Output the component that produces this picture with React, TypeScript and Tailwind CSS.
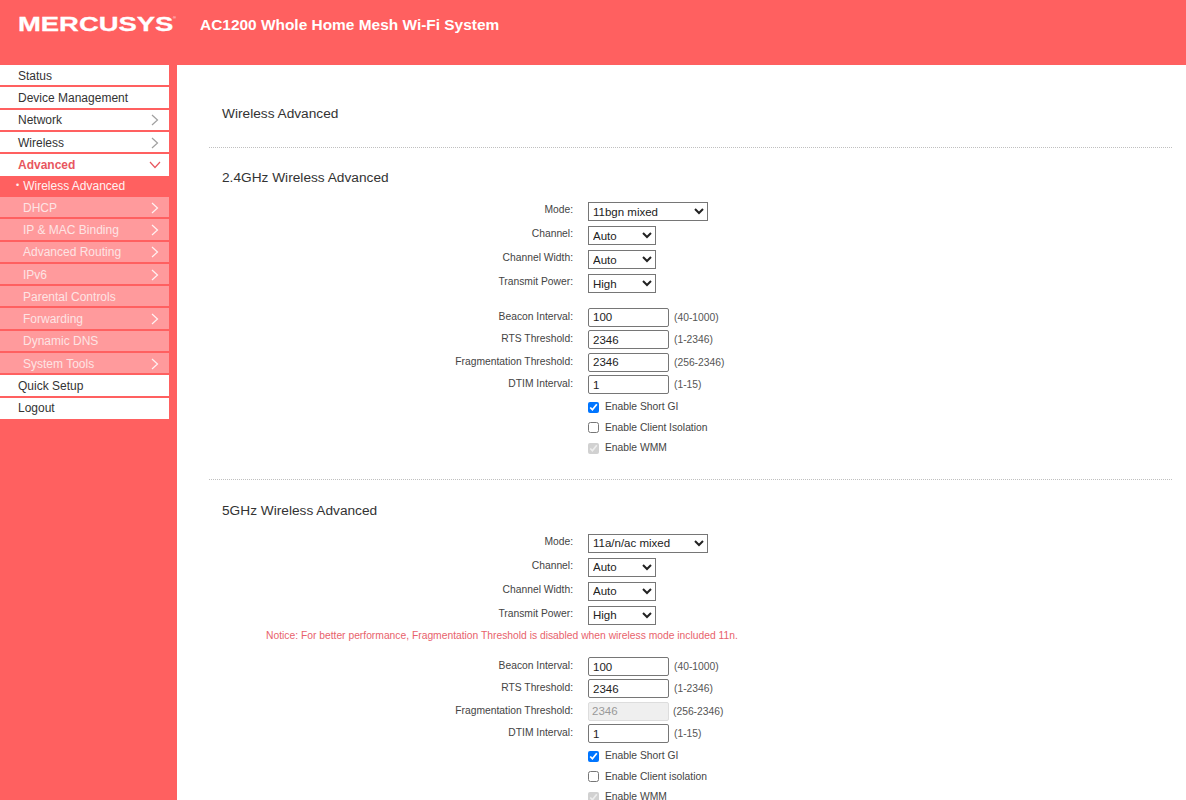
const menuTop = [
  { label: 'Status' },
  { label: 'Device Management' },
  { label: 'Network', arrow: true },
  { label: 'Wireless', arrow: true },
];

const subMenu = [
  { label: 'DHCP', arrow: true },
  { label: 'IP & MAC Binding', arrow: true },
  { label: 'Advanced Routing', arrow: true },
  { label: 'IPv6', arrow: true },
  { label: 'Parental Controls' },
  { label: 'Forwarding', arrow: true },
  { label: 'Dynamic DNS' },
  { label: 'System Tools', arrow: true },
];

function Chevron({ className }: { className: string }) {
  return (
    <svg width="8" height="12" viewBox="0 0 8 12" fill="none" className={className}>
      <path d="M1 1l5.5 5L1 11" stroke="currentColor" strokeWidth="1.2" />
    </svg>
  );
}

function MenuRow({ label, arrow }: { label: string; arrow?: boolean }) {
  return (
    <div className="flex h-[22.3px] items-center justify-between border-b-2 border-[#ff6060] bg-white pl-[18px] pr-[10px] pt-[1px] text-[12px] text-[#333]">
      <span>{label}</span>
      {arrow && <Chevron className="text-[#a0a0a0]" />}
    </div>
  );
}

function SubRow({ label, arrow }: { label: string; arrow?: boolean }) {
  return (
    <div className="flex h-[22.3px] items-center justify-between border-b-2 border-[#ff6060] bg-[#ff9a9c] pl-[23px] pr-[10px] pt-[1px] text-[12px] text-[#fde4e4]">
      <span>{label}</span>
      {arrow && <Chevron className="text-[#fff2f2]" />}
    </div>
  );
}

function Sidebar() {
  return (
    <aside className="w-[177px] shrink-0 bg-[#ff6060] pr-2">
      {menuTop.map((m) => (
        <MenuRow key={m.label} label={m.label} arrow={m.arrow} />
      ))}
      <div className="flex h-[22.3px] items-center justify-between bg-white pl-[18px] pr-[8px] text-[12px] font-bold text-[#e8575f]">
        <span>Advanced</span>
        <svg width="12" height="8" viewBox="0 0 12 8" fill="none" className="text-[#e8575f]">
          <path d="M1 1l5 5.5L11 1" stroke="currentColor" strokeWidth="1.2" />
        </svg>
      </div>
      <div className="flex h-[20.5px] items-center bg-[#ff6060] pb-[2px] pl-4 text-[12px] text-[#fff2f2]">
        <span className="mr-[4px] text-[9px]">•</span>
        <span>Wireless Advanced</span>
      </div>
      {subMenu.map((m) => (
        <SubRow key={m.label} label={m.label} arrow={m.arrow} />
      ))}
      <MenuRow label="Quick Setup" />
      <div className="flex h-[21px] items-center bg-white pl-[18px] text-[12px] text-[#333]">Logout</div>
    </aside>
  );
}

function Row({
  label,
  hint,
  height,
  dim,
  labelShift,
  children,
}: {
  label?: string;
  hint?: string;
  height: string;
  dim?: boolean;
  labelShift: string;
  children: React.ReactNode;
}) {
  return (
    <div className={`flex items-center ${height}`}>
      <div className={`w-[364px] text-right text-[10.3px] text-[#444] ${labelShift}`}>{label}</div>
      <div className="ml-[15px] flex items-center">
        {children}
        {hint && <span className={`${dim ? 'ml-[4px]' : 'ml-[5px]'} text-[10.3px] text-[#555]`}>{hint}</span>}
      </div>
    </div>
  );
}

function Select({ value, wide }: { value: string; wide?: boolean }) {
  return (
    <select
      defaultValue={value}
      className={`${wide ? 'w-[120px]' : 'w-[68px]'} h-[19px] border border-[#767676] bg-white text-[11.5px] text-[#222]`}
    >
      <option>{value}</option>
    </select>
  );
}

function TextInput({ value, disabled }: { value: string; disabled?: boolean }) {
  return (
    <input
      readOnly
      disabled={disabled}
      value={value}
      className={
        disabled
          ? 'h-[19px] w-[81px] rounded-[2px] border border-[#ddd] bg-[#efefef] px-[3px] text-[11.5px] text-[#999]'
          : 'h-[19px] w-[81px] rounded-[2px] border border-[#767676] bg-white px-[4px] text-[11.5px] text-[#222]'
      }
    />
  );
}

function Check({ label, checked, disabled }: { label: string; checked?: boolean; disabled?: boolean }) {
  return (
    <Row height="h-[20.5px]" labelShift="">
      <input
        type="checkbox"
        readOnly
        checked={!!checked}
        disabled={disabled}
        className="m-0 h-[11px] w-[11px] accent-[#0075ff]"
      />
      <span className="ml-[6px] -translate-y-[0.5px] text-[10.3px] text-[#444]">{label}</span>
    </Row>
  );
}

function Section({
  title,
  mode,
  notice,
  isolation,
  fragDisabled,
}: {
  title: string;
  mode: string;
  notice?: boolean;
  isolation: string;
  fragDisabled?: boolean;
}) {
  const up = '-translate-y-[2px]';
  const down = '-translate-y-[1px]';
  return (
    <section>
      <div
        className={`flex items-end pl-[13px] text-[13.7px] text-[#333] ${notice ? 'h-[51px] pb-[10px]' : 'h-[52px] pb-[11px]'}`}
      >
        {title}
      </div>
      <Row label="Mode:" height="h-6" labelShift={up}>
        <Select value={mode} wide />
      </Row>
      <Row label="Channel:" height="h-6" labelShift={up}>
        <Select value="Auto" />
      </Row>
      <Row label="Channel Width:" height="h-6" labelShift={up}>
        <Select value="Auto" />
      </Row>
      <Row label="Transmit Power:" height="h-6" labelShift={up}>
        <Select value="High" />
      </Row>
      {notice ? (
        <div className="h-[28px] pl-[57px] pt-[1px] text-[10.3px] text-[#e8626c]">
          Notice: For better performance, Fragmentation Threshold is disabled when wireless mode included 11n.
        </div>
      ) : (
        <div className="h-[10.8px]" />
      )}
      <Row label="Beacon Interval:" hint="(40-1000)" height="h-[22.4px]" labelShift={down}>
        <TextInput value="100" />
      </Row>
      <Row label="RTS Threshold:" hint="(1-2346)" height="h-[22.4px]" labelShift={down}>
        <TextInput value="2346" />
      </Row>
      <Row
        label="Fragmentation Threshold:"
        hint="(256-2346)"
        height="h-[22.4px]"
        dim={fragDisabled}
        labelShift={down}
      >
        <TextInput value="2346" disabled={fragDisabled} />
      </Row>
      <Row label="DTIM Interval:" hint="(1-15)" height="h-[22.4px]" labelShift={down}>
        <TextInput value="1" />
      </Row>
      <div className="h-[1px]" />
      <Check label="Enable Short GI" checked />
      <Check label={isolation} />
      <Check label="Enable WMM" checked disabled />
    </section>
  );
}

export default function App() {
  return (
    <div className="flex h-[800px] flex-col overflow-hidden bg-white font-['Liberation_Sans',Arial,sans-serif]">
      <header className="flex h-[65px] shrink-0 bg-[#ff6060] text-white">
        <div className="relative ml-[18px] mt-[12px] h-6 w-[182px] shrink-0">
          <span className="inline-block origin-left scale-x-[1.37] text-[20px] font-bold leading-6 [-webkit-text-stroke:0.3px_white]">
            MERCUSYS
          </span>
          <span className="absolute left-[155px] top-[4px] text-[4px] leading-none">®</span>
        </div>
        <div className="mt-[15px] text-[15.45px] leading-5 font-bold">AC1200 Whole Home Mesh Wi-Fi System</div>
      </header>
      <div className="flex min-h-0 flex-1">
        <Sidebar />
        <main className="min-w-0 flex-1 pl-8 pr-[14px]">
          <div className="flex h-[82.5px] items-center border-b border-dotted border-[#c0c0c0] pl-[13px] pt-[17px] text-[13.7px] text-[#333]">
            Wireless Advanced
          </div>
          <Section title="2.4GHz Wireless Advanced" mode="11bgn mixed" isolation="Enable Client Isolation" />
          <div className="mt-[21px] border-b border-dotted border-[#c0c0c0]" />
          <Section
            title="5GHz Wireless Advanced"
            mode="11a/n/ac mixed"
            isolation="Enable Client isolation"
            notice
            fragDisabled
          />
        </main>
      </div>
    </div>
  );
}
